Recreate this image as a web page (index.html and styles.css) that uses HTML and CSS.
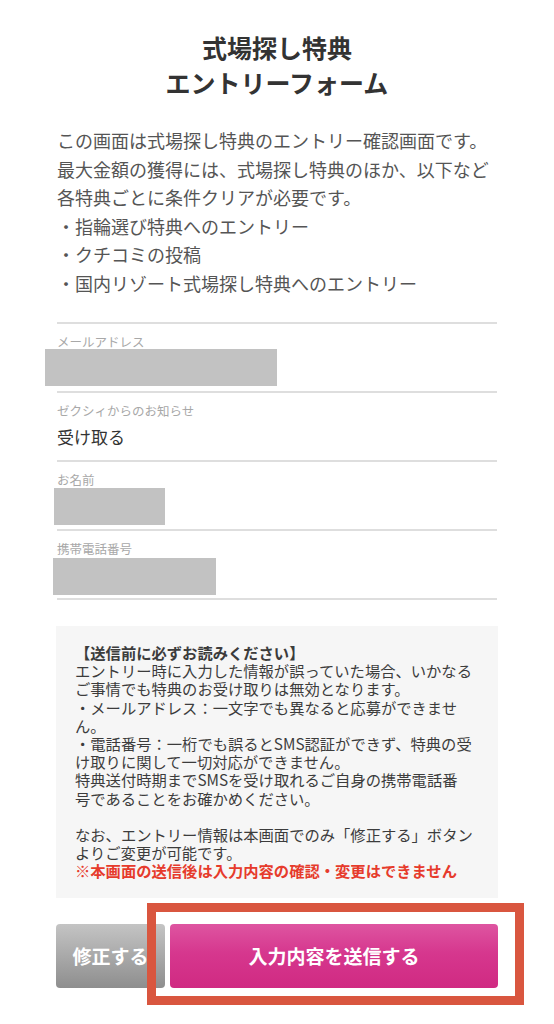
FILE: index.html
```html
<!DOCTYPE html>
<html lang="ja">
<head>
    <meta charset="UTF-8">
    <meta name="viewport" content="width=device-width, initial-scale=1.0">
    <title>式場探し特典 エントリーフォーム</title>
    <link rel="stylesheet" href="styles.css">
</head>
<body>
    <div class="page">
        <h1 class="title">式場探し特典<br>エントリーフォーム</h1>

        <div class="intro">
            この画面は式場探し特典のエントリー確認画面です。<br>
            最大金額の獲得には、式場探し特典のほか、以下など<br>
            各特典ごとに条件クリアが必要です。<br>
            ・指輪選び特典へのエントリー<br>
            ・クチコミの投稿<br>
            ・国内リゾート式場探し特典へのエントリー
        </div>

        <div class="fields">
            <div class="field">
                <div class="field-label">メールアドレス</div>
                <div class="masked masked-mail"></div>
            </div>
            <div class="field">
                <div class="field-label">ゼクシィからのお知らせ</div>
                <div class="field-value">受け取る</div>
            </div>
            <div class="field">
                <div class="field-label">お名前</div>
                <div class="masked masked-name"></div>
            </div>
            <div class="field">
                <div class="field-label">携帯電話番号</div>
                <div class="masked masked-tel"></div>
            </div>
        </div>

        <div class="notice">
            <div class="notice-head">【送信前に必ずお読みください】</div>
            エントリー時に入力した情報が誤っていた場合、いかなる<br>
            ご事情でも特典のお受け取りは無効となります。<br>
            ・メールアドレス：一文字でも異なると応募ができませ<br>
            ん。<br>
            ・電話番号：一桁でも誤るとSMS認証ができず、特典の受<br>
            け取りに関して一切対応ができません。<br>
            特典送付時期までSMSを受け取れるご自身の携帯電話番<br>
            号であることをお確かめください。<br>
            <br>
            なお、エントリー情報は本画面でのみ「修正する」ボタン<br>
            よりご変更が可能です。<br>
            <span class="notice-warn">※本画面の送信後は入力内容の確認・変更はできません</span>
        </div>

        <div class="actions">
            <button class="btn btn-back">修正する</button>
            <button class="btn btn-send">入力内容を送信する</button>
            <div class="highlight"></div>
        </div>
    </div>
</body>
</html>
```

FILE: styles.css
```css
body {
    margin: 0;
    background-color: #ffffff;
    font-family: "Noto Sans CJK JP", "Noto Sans", sans-serif;
    color: #555555;
}
.page {
    width: 442px;
    margin: 0 auto;
    padding-top: 30px;
    padding-bottom: 20px;
}
.title {
    margin: 0;
    text-align: center;
    font-size: 25px;
    line-height: 35px;
    font-weight: bold;
    color: #333333;
}
.intro {
    margin-top: 26px;
    padding-left: 1px;
    font-size: 18px;
    line-height: 28.5px;
    color: #555555;
    white-space: nowrap;
}
.fields {
    margin: 25px 1px 0;
    border-bottom: 2px solid #dedede;
}
.field {
    border-top: 2px solid #dedede;
    padding: 11px 0 5px;
}
.field-label {
    font-size: 12.5px;
    line-height: 14px;
    color: #a8a8a8;
    white-space: nowrap;
}
.field-value {
    height: 37px;
    line-height: 37px;
    font-size: 17px;
    color: #333333;
}
.masked {
    height: 37px;
    background-color: #c2c2c2;
}
.masked-mail {
    width: 232px;
    margin-left: -12px;
}
.masked-name {
    width: 111px;
    margin-left: -3px;
    margin-top: 1px;
    margin-bottom: -1px;
}
.masked-tel {
    width: 163px;
    margin-left: -4px;
    margin-top: 2px;
    margin-bottom: -2px;
}
.notice {
    margin-top: 26px;
    padding: 17px 10px 18px 19px;
    background-color: #f6f6f6;
    font-size: 15.3px;
    line-height: 18.2px;
    color: #3c3c3c;
    white-space: nowrap;
}
.notice-head {
    font-weight: bold;
}
.notice-warn {
    font-weight: bold;
    color: #e63b2c;
}
.actions {
    position: relative;
    display: flex;
    gap: 5px;
    margin-top: 26px;
    height: 64px;
}
.btn {
    border: none;
    border-radius: 4px;
    font-family: "Noto Sans CJK JP", "Noto Sans", sans-serif;
    font-size: 19px;
    font-weight: bold;
    color: #ffffff;
    cursor: pointer;
    padding: 0;
}
.btn-back {
    width: 109px;
    background: linear-gradient(to bottom, #c4c4c4, #8e8e8e);
}
.btn-send {
    flex: 1;
    background: linear-gradient(to bottom, #de55a1 0%, #d6378e 45%, #d02a82 100%);
}
.highlight {
    position: absolute;
    box-sizing: border-box;
    left: 91px;
    top: -21px;
    width: 377px;
    height: 102px;
    border: 9px solid #d9563f;
    pointer-events: none;
}
```
